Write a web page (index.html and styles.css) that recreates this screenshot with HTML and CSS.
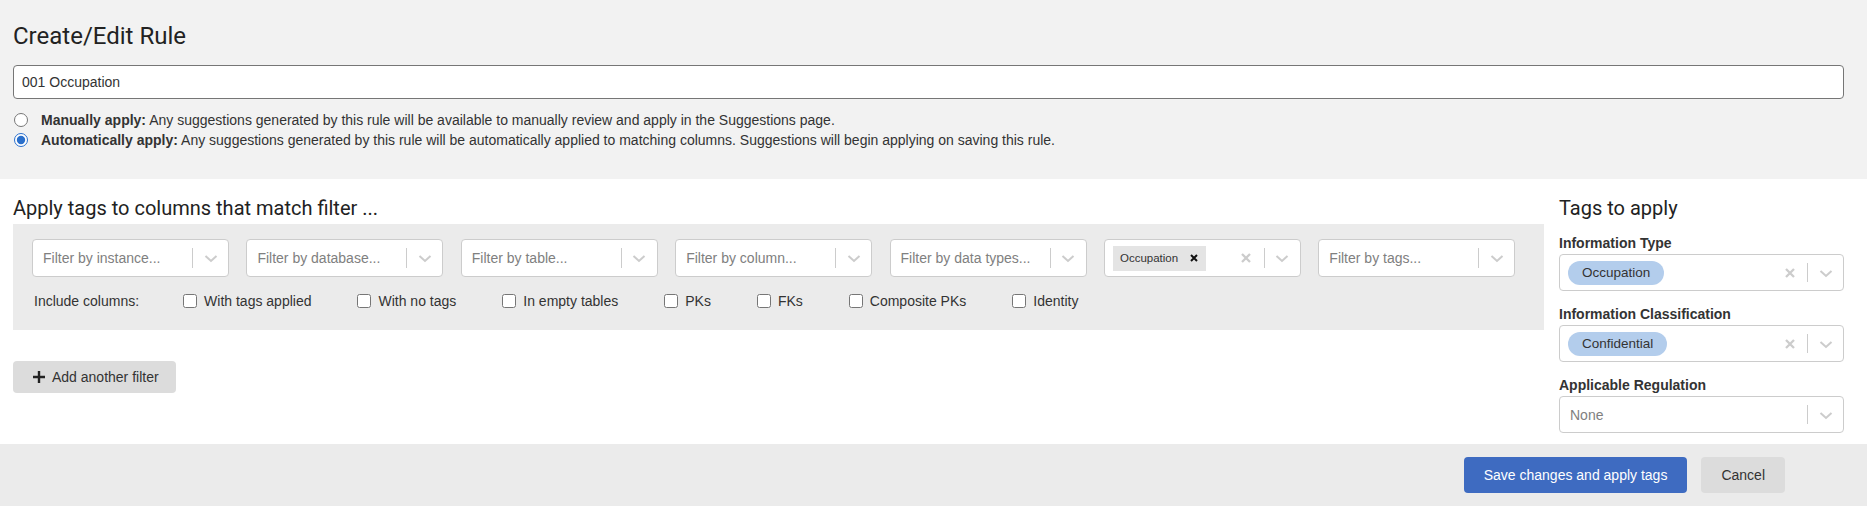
FILE: index.html
```html
<!DOCTYPE html>
<html>
<head>
  <title>Create/Edit Rule</title>
  <link rel="stylesheet" href="styles.css">
</head>
<body>
  <div class="rule-head">
    <h1>Create/Edit Rule</h1>
    <input type="text" class="rule-name" value="001 Occupation">
    <div class="apply-modes">
      <label class="mode">
        <input type="radio" name="mode">
        <span><b>Manually apply:</b> Any suggestions generated by this rule will be available to manually review and apply in the Suggestions page.</span>
      </label>
      <label class="mode">
        <input type="radio" name="mode" checked>
        <span><b>Automatically apply:</b> Any suggestions generated by this rule will be automatically applied to matching columns. Suggestions will begin applying on saving this rule.</span>
      </label>
    </div>
  </div>

  <div class="editor">
    <div class="filters">
      <h2>Apply tags to columns that match filter ...</h2>
      <div class="filter-panel">
        <div class="filter-row">
          <div class="select">
            <div class="value">Filter by instance...</div>
            <span class="sep"></span>
            <span class="ind"><svg width="20" height="20" viewBox="0 0 20 20"><polyline points="4.5,8 10,13 15.5,8" fill="none" stroke="#ccc" stroke-width="2"/></svg></span>
          </div>
          <div class="select">
            <div class="value">Filter by database...</div>
            <span class="sep"></span>
            <span class="ind"><svg width="20" height="20" viewBox="0 0 20 20"><polyline points="4.5,8 10,13 15.5,8" fill="none" stroke="#ccc" stroke-width="2"/></svg></span>
          </div>
          <div class="select">
            <div class="value">Filter by table...</div>
            <span class="sep"></span>
            <span class="ind"><svg width="20" height="20" viewBox="0 0 20 20"><polyline points="4.5,8 10,13 15.5,8" fill="none" stroke="#ccc" stroke-width="2"/></svg></span>
          </div>
          <div class="select">
            <div class="value">Filter by column...</div>
            <span class="sep"></span>
            <span class="ind"><svg width="20" height="20" viewBox="0 0 20 20"><polyline points="4.5,8 10,13 15.5,8" fill="none" stroke="#ccc" stroke-width="2"/></svg></span>
          </div>
          <div class="select">
            <div class="value">Filter by data types...</div>
            <span class="sep"></span>
            <span class="ind"><svg width="20" height="20" viewBox="0 0 20 20"><polyline points="4.5,8 10,13 15.5,8" fill="none" stroke="#ccc" stroke-width="2"/></svg></span>
          </div>
          <div class="select">
            <div class="value multi">
              <span class="chip">Occupation <svg width="8" height="8" viewBox="0 0 8 8"><path d="M1 1L7 7M7 1L1 7" stroke="#111" stroke-width="2"/></svg></span>
            </div>
            <span class="ind"><svg width="20" height="20" viewBox="0 0 20 20"><path d="M6 6L14 14M14 6L6 14" stroke="#ccc" stroke-width="2.3"/></svg></span>
            <span class="sep"></span>
            <span class="ind"><svg width="20" height="20" viewBox="0 0 20 20"><polyline points="4.5,8 10,13 15.5,8" fill="none" stroke="#ccc" stroke-width="2"/></svg></span>
          </div>
          <div class="select">
            <div class="value">Filter by tags...</div>
            <span class="sep"></span>
            <span class="ind"><svg width="20" height="20" viewBox="0 0 20 20"><polyline points="4.5,8 10,13 15.5,8" fill="none" stroke="#ccc" stroke-width="2"/></svg></span>
          </div>
        </div>

        <div class="include">
          <span class="include-label">Include columns:</span>
          <label class="check"><input type="checkbox"> With tags applied</label>
          <label class="check"><input type="checkbox"> With no tags</label>
          <label class="check"><input type="checkbox"> In empty tables</label>
          <label class="check"><input type="checkbox"> PKs</label>
          <label class="check"><input type="checkbox"> FKs</label>
          <label class="check"><input type="checkbox"> Composite PKs</label>
          <label class="check"><input type="checkbox"> Identity</label>
        </div>
      </div>

      <button class="add-filter"><svg width="12" height="12" viewBox="0 0 12 12"><path d="M4.8 0h2.4v4.8H12v2.4H7.2V12H4.8V7.2H0V4.8h4.8z" fill="#222"/></svg>Add another filter</button>
    </div>

    <div class="tags">
      <h2>Tags to apply</h2>

      <div class="tag-field">
        <label>Information Type</label>
        <div class="select wide">
          <div class="value multi"><span class="pill">Occupation</span></div>
          <span class="ind"><svg width="20" height="20" viewBox="0 0 20 20"><path d="M6 6L14 14M14 6L6 14" stroke="#ccc" stroke-width="2.3"/></svg></span>
          <span class="sep"></span>
          <span class="ind"><svg width="20" height="20" viewBox="0 0 20 20"><polyline points="4.5,8 10,13 15.5,8" fill="none" stroke="#ccc" stroke-width="2"/></svg></span>
        </div>
      </div>

      <div class="tag-field">
        <label>Information Classification</label>
        <div class="select wide">
          <div class="value multi"><span class="pill">Confidential</span></div>
          <span class="ind"><svg width="20" height="20" viewBox="0 0 20 20"><path d="M6 6L14 14M14 6L6 14" stroke="#ccc" stroke-width="2.3"/></svg></span>
          <span class="sep"></span>
          <span class="ind"><svg width="20" height="20" viewBox="0 0 20 20"><polyline points="4.5,8 10,13 15.5,8" fill="none" stroke="#ccc" stroke-width="2"/></svg></span>
        </div>
      </div>

      <div class="tag-field">
        <label>Applicable Regulation</label>
        <div class="select wide">
          <div class="value">None</div>
          <span class="sep"></span>
          <span class="ind"><svg width="20" height="20" viewBox="0 0 20 20"><polyline points="4.5,8 10,13 15.5,8" fill="none" stroke="#ccc" stroke-width="2"/></svg></span>
        </div>
      </div>
    </div>
  </div>

  <div class="actions">
    <button class="btn btn-primary">Save changes and apply tags</button>
    <button class="btn">Cancel</button>
  </div>
</body>
</html>
```

FILE: styles.css
```css
* {
  box-sizing: border-box;
}

body {
  margin: 0;
  background: #fff;
  color: #333;
  font-family: "Liberation Sans", Arial, sans-serif;
  font-size: 14px;
}

.rule-head {
  background: #f2f2f2;
  height: 179px;
  padding: 22px 23px 0 13px;
}

h1 {
  font-family: Roboto, sans-serif;
  font-size: 24px;
  font-weight: 400;
  line-height: 28px;
  color: #222;
  margin: 0 0 15px;
}

.rule-name {
  display: block;
  width: 100%;
  height: 34px;
  padding: 0 8px;
  border: 1px solid #767676;
  border-radius: 4px;
  background: #fff;
  color: #333;
  font-family: "Liberation Sans", Arial, sans-serif;
  font-size: 14px;
}

.apply-modes {
  margin-top: 11px;
}

.mode {
  display: flex;
  align-items: center;
  gap: 13px;
  height: 20px;
}

.mode input {
  width: 14px;
  height: 14px;
  margin: 0 0 0 1px;
  accent-color: #2a6fcb;
}

.editor {
  display: flex;
  gap: 15px;
  padding: 17px 23px 11px 13px;
}

.filters {
  flex: 1;
}

.tags {
  width: 285px;
}

h2 {
  font-family: Roboto, sans-serif;
  font-size: 20px;
  font-weight: 400;
  line-height: 24px;
  color: #222;
  margin: 0 0 4px;
}

.tags h2 {
  margin-bottom: 0;
}

.filter-panel {
  background: #ebebeb;
  padding: 15px 19px 19px;
}

.filter-row {
  display: flex;
  gap: 17.4px;
}

.select {
  display: flex;
  align-items: center;
  width: 197px;
  height: 38px;
  background: #fff;
  border: 1px solid #ccc;
  border-radius: 4px;
}

.select.wide {
  width: 100%;
  height: 37px;
}

.value {
  flex: 1;
  padding: 0 10px;
  color: #808080;
  white-space: nowrap;
  overflow: hidden;
}

.value.multi {
  padding: 0 8px;
  display: flex;
  align-items: center;
}

.sep {
  align-self: stretch;
  width: 1px;
  margin: 8px 0;
  background: #ccc;
}

.ind {
  display: flex;
  justify-content: center;
  align-items: center;
  width: 35px;
}

.chip {
  display: flex;
  align-items: center;
  gap: 12px;
  height: 25px;
  padding: 0 8px 0 7px;
  background: #e4e4e4;
  color: #333;
  font-size: 11.5px;
}

.pill {
  height: 24px;
  line-height: 24px;
  padding: 0 14px;
  border-radius: 12px;
  background: #b3cdec;
  color: #333;
  font-size: 13.5px;
}

.include {
  display: flex;
  align-items: center;
  height: 20px;
  margin-top: 14px;
  padding-left: 2px;
}

.include-label {
  margin-right: -2px;
}

.check {
  display: flex;
  align-items: center;
  gap: 7px;
  margin-left: 46px;
}

.check input {
  width: 14px;
  height: 14px;
  margin: 0;
}

.add-filter {
  display: inline-flex;
  align-items: center;
  gap: 7px;
  height: 32px;
  margin-top: 31px;
  padding: 0 17px 0 20px;
  border: none;
  border-radius: 4px;
  background: #dcdcdc;
  color: #333;
  font-family: "Liberation Sans", Arial, sans-serif;
  font-size: 14px;
}

.tag-field {
  padding-top: 15px;
}

.tag-field label {
  display: block;
  font-weight: bold;
  line-height: 16px;
  margin-bottom: 3px;
}

.actions {
  display: flex;
  justify-content: flex-end;
  align-items: center;
  gap: 14px;
  height: 62px;
  padding-right: 82px;
  background: #ebebeb;
}

.btn {
  height: 36px;
  padding: 0 20px;
  border: none;
  border-radius: 4px;
  background: #dcdcdc;
  color: #333;
  font-family: "Liberation Sans", Arial, sans-serif;
  font-size: 14px;
}

.btn-primary {
  background: #3e6bc1;
  color: #fff;
}
```
